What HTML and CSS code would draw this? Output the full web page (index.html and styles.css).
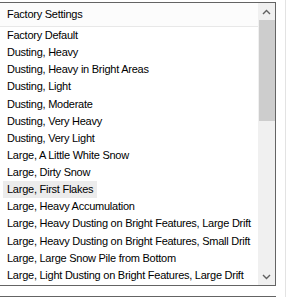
FILE: index.html
```html
<!DOCTYPE html>
<html lang="en">
<head>
    <meta charset="UTF-8">
    <meta name="viewport" content="width=device-width, initial-scale=1.0">
    <title>Factory Settings</title>
    <link rel="stylesheet" href="styles.css">
</head>
<body>
    <div class="page">
        <div class="pane">
            <div class="dropdown">
                <div class="list">
                    <div class="header">Factory Settings</div>
                    <div class="items">
                        <div class="item"><span>Factory Default</span></div>
                        <div class="item"><span>Dusting, Heavy</span></div>
                        <div class="item"><span>Dusting, Heavy in Bright Areas</span></div>
                        <div class="item"><span>Dusting, Light</span></div>
                        <div class="item"><span>Dusting, Moderate</span></div>
                        <div class="item"><span>Dusting, Very Heavy</span></div>
                        <div class="item"><span>Dusting, Very Light</span></div>
                        <div class="item"><span>Large, A Little White Snow</span></div>
                        <div class="item"><span>Large, Dirty Snow</span></div>
                        <div class="item hover"><span>Large, First Flakes</span></div>
                        <div class="item"><span>Large, Heavy Accumulation</span></div>
                        <div class="item"><span>Large, Heavy Dusting on Bright Features, Large Drift</span></div>
                        <div class="item"><span>Large, Heavy Dusting on Bright Features, Small Drift</span></div>
                        <div class="item"><span>Large, Large Snow Pile from Bottom</span></div>
                        <div class="item"><span>Large, Light Dusting on Bright Features, Large Drift</span></div>
                    </div>
                </div>
                <div class="scrollbar">
                    <div class="arrow">
                        <svg width="9" height="6" viewBox="0 0 9 6"><path d="M1 5 L4.5 1.5 L8 5" fill="none" stroke="#606060" stroke-width="1.4"/></svg>
                    </div>
                    <div class="track"><div class="thumb"></div></div>
                    <div class="arrow">
                        <svg width="9" height="6" viewBox="0 0 9 6"><path d="M1 1 L4.5 4.5 L8 1" fill="none" stroke="#606060" stroke-width="1.4"/></svg>
                    </div>
                </div>
            </div>
            <div class="next-box"></div>
        </div>
    </div>
</body>
</html>
```

FILE: styles.css
```css
body {
    margin: 0;
    background-color: #fff;
    font-family: "Liberation Sans", Arial, sans-serif;
    font-size: 11px;
    letter-spacing: -0.25px;
    color: #000;
}

.page {
    display: flex;
    height: 297px;
    overflow: hidden;
}

.pane {
    width: 285px;
    border-right: 1px solid #e3e3e3;
}

.dropdown {
    display: flex;
    width: 275px;
    height: 282px;
    margin-top: 2px;
    border: 1px solid #646464;
    border-left: none;
}

.list {
    flex: 1;
    min-width: 0;
    overflow: hidden;
}

.header {
    height: 23px;
    line-height: 23px;
    padding-left: 7px;
    border-bottom: 1px solid #e8e8e8;
    background-color: #fcfcfc;
}

.item {
    height: 17.14px;
    line-height: 17px;
    padding-left: 3px;
    white-space: nowrap;
}

.item span {
    display: inline-block;
    padding: 0 4px;
}

.item.hover span {
    background-color: #ececec;
}

.scrollbar {
    width: 17px;
    display: flex;
    flex-direction: column;
    background-color: #f0f0f0;
}

.arrow {
    height: 17px;
    display: flex;
    justify-content: center;
    align-items: center;
}

.track {
    flex: 1;
}

.thumb {
    height: 101px;
    margin-left: 1px;
    background-color: #cdcdcd;
}

.next-box {
    width: 275px;
    height: 20px;
    margin-top: 10px;
    border-top: 1px solid #646464;
    border-right: 1px solid #646464;
}
```
